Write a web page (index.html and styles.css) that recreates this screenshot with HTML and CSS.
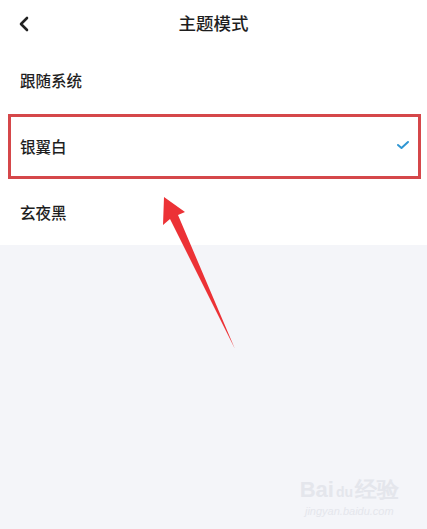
FILE: index.html
```html
<!DOCTYPE html>
<html lang="zh">
<head>
<meta charset="utf-8">
<link rel="stylesheet" href="styles.css">
</head>
<body>
<div class="page">
  <header class="topbar">
    <svg class="back" width="12" height="16" viewBox="0 0 12 16"><path d="M9 2 L3 8 L9 14" fill="none" stroke="#222" stroke-width="2.6" stroke-linecap="round" stroke-linejoin="round"/></svg>
    <h1 class="title">主题模式</h1>
  </header>
  <ul class="list">
    <li class="row">跟随系统</li>
    <li class="row selected">银翼白
      <svg class="check" width="14" height="10" viewBox="0 0 14 10"><path d="M2 5 L5.5 8 L12 2" fill="none" stroke="#2f96d3" stroke-width="2" stroke-linecap="round" stroke-linejoin="round"/></svg>
    </li>
    <li class="row">玄夜黑</li>
  </ul>
  <div class="rest">
    <div class="watermark">
      <div class="wm-logo">Bai<span class="wm-du">du</span>经验</div>
      <div class="wm-url">jingyan.baidu.com</div>
    </div>
  </div>
  <div class="highlight"></div>
  <svg class="arrow" width="427" height="529" viewBox="0 0 427 529"><polygon points="164,197 185,212 178,215 235,349 170,219 163,225" fill="#ec3236"/></svg>
</div>
</body>
</html>
```
FILE: styles.css
```css
html, body {
  margin: 0;
  padding: 0;
  background: #f4f5f9;
}
.page {
  position: relative;
  width: 427px;
  height: 529px;
  font-family: "Noto Sans CJK SC", "Noto Sans", sans-serif;
  color: #1e1e1e;
  display: flex;
  flex-direction: column;
  overflow: hidden;
}
.topbar {
  height: 47px;
  background: #fff;
  display: flex;
  align-items: center;
  justify-content: center;
  position: relative;
}
.back {
  position: absolute;
  left: 18px;
  top: 16px;
}
.title {
  margin: 0;
  font-size: 17.5px;
  font-weight: 500;
  line-height: 1;
  margin-top: -2px;
}
.list {
  list-style: none;
  margin: 0;
  padding: 0;
  background: #fff;
}
.row {
  height: 66px;
  display: flex;
  align-items: center;
  justify-content: space-between;
  padding: 0 17px 0 20px;
  font-size: 15.5px;
  font-weight: 500;
}
.check {
  margin-top: -2px;
}
.rest {
  flex: 1;
  background: #f4f5f9;
  position: relative;
}
.watermark {
  position: absolute;
  right: 28px;
  bottom: 12px;
  color: #e4e6ec;
  text-align: center;
  font-family: "Liberation Sans", sans-serif;
}
.wm-logo {
  font-size: 22px;
  font-weight: 700;
  letter-spacing: 0;
}
.wm-du {
  font-size: 14px;
  margin: 0 2px;
}
.wm-url {
  font-size: 11px;
  font-style: italic;
}
.highlight {
  position: absolute;
  left: 8px;
  top: 114px;
  width: 407px;
  height: 59px;
  border: 3px solid #d5474a;
}
.arrow {
  position: absolute;
  left: 0;
  top: 0;
}
```
